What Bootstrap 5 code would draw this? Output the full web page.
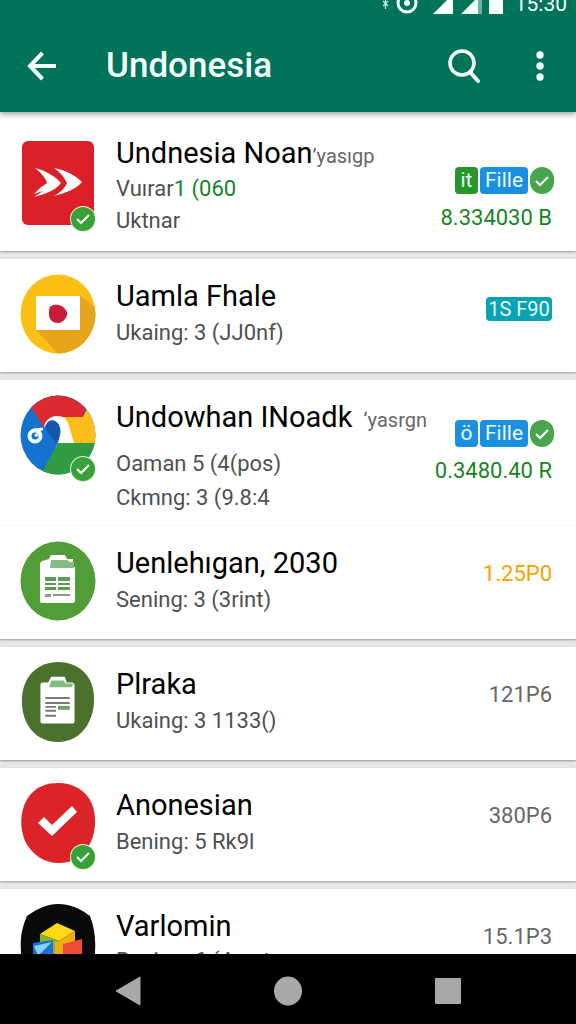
<!DOCTYPE html>
<html lang="id">
<head>
<meta charset="utf-8">
<meta name="viewport" content="width=device-width, initial-scale=1">
<title>Undonesia</title>
<link href="https://cdn.jsdelivr.net/npm/bootstrap@5.3.0/dist/css/bootstrap.min.css" rel="stylesheet">
<script src="https://cdn.jsdelivr.net/npm/bootstrap@5.3.0/dist/js/bootstrap.bundle.min.js" defer></script>
<style>
body{font-family:Roboto,"Liberation Sans",sans-serif;background:#e6e7e8;color:#000}
.app-header{background:#007359;color:#f4fffc;box-shadow:0 2px 6px rgba(0,0,0,.4);z-index:2}
.status-bar{height:14px;overflow:hidden;padding-right:9px;font-size:21px;line-height:20px}
.toolbar{height:98px;padding:6px 12px 0 18px}
.toolbar h1{font-size:35px;line-height:44px;font-weight:500}
.icon-btn{background:none;border:0;padding:0;color:inherit;width:48px;height:48px;display:flex;align-items:center;justify-content:center}
.entry{background:#fff;padding:0 24px 18px 20px;margin-bottom:8px;box-shadow:0 1px 2px rgba(0,0,0,.35)}
.entry.joined{margin-bottom:0;box-shadow:none}
.avatar{width:76px;margin-top:15px}
.avatar svg{display:block}
.texts{margin-left:20px;padding-top:17px}
.entry h2{font-size:29px;line-height:40px;font-weight:400;margin:0;white-space:nowrap}
.tag{font-size:20px;line-height:20px;color:#666}
.entry p{font-size:22px;line-height:34px;margin:0;color:#505050;white-space:nowrap}
.side{padding-top:32px;font-size:22px;line-height:32px;color:#666;white-space:nowrap}
.entry .money{color:#17851f}
.amber{color:#f5a300}
.chips{gap:2px;margin-right:-2px}
.chip{font-size:21px;line-height:27px;height:27px;color:#e9fbff;border-radius:4px;background:#1b8fe0}
.chip-sm{width:23px;text-align:center}
.chip-lg{width:48px;text-align:center}
.chip-green{background:#27962a}
.chip-teal{background:#08a3b3;line-height:24px;height:24px;font-size:20px;width:66px;text-align:center;margin-top:6px}
.entry.first .avatar{margin-top:29px}
.entry.first .texts{padding-top:21px}
.entry.first p{line-height:32px}
.entry.first{padding-bottom:14px}
.entry.first .side{padding-top:55px}
.entry.joined{padding-bottom:11px}
.entry.joined .side{padding-top:40px}
.entry.joined p:first-of-type{margin-top:10px}
.entry.last p{line-height:30px}
.check-badge{right:-1px;bottom:-8px}
.system-nav{background:#000;height:70px;padding:3px 48px 0;color:#a8a8a8;z-index:3}
</style>
</head>
<body class="vh-100 d-flex flex-column overflow-hidden">

<svg width="0" height="0" class="position-absolute" aria-hidden="true">
  <symbol id="check" viewBox="0 0 28 28"><circle cx="14" cy="14" r="13" fill="#e5f2cf"/><circle cx="14" cy="14" r="12" fill="#38a139"/><path d="M8 14l4 4 8-8" fill="none" stroke="#fff" stroke-width="2"/></symbol>
  <symbol id="tick" viewBox="0 0 24 27"><rect width="24" height="27" rx="12" fill="#49a54d"/><path d="M6 14l4 4 8-8" fill="none" stroke="#fff" stroke-width="2"/></symbol>
</svg>

<header class="app-header position-relative flex-shrink-0">
  <div class="status-bar d-flex justify-content-end align-items-end">
    <svg width="128" height="14" viewBox="0 0 128 14" fill="#f4fffc" aria-hidden="true">
      <path d="M4 1l5 5M9 1L4 6M6.500 0v9" stroke="#cdebe2" stroke-width="1.200"/>
      <circle cx="28" cy="3" r="9" fill="none" stroke="#f4fffc" stroke-width="3"/><circle cx="28" cy="3" r="3"/>
      <path d="M54 14L74 -6V14ZM82 14L99 -3V14Z"/><path d="M99 0h4v14h-4z" opacity=".45"/><path d="M110 0h14v14h-14z"/>
    </svg>
    <span class="ms-2">15:30</span>
  </div>
  <div class="toolbar d-flex align-items-center">
    <button class="icon-btn" type="button" aria-label="Back"><svg width="30" height="30" viewBox="0 0 30 30" fill="none" stroke="currentColor" stroke-width="4"><path d="M15.500 2L3 15l12.500 13M3 15h26"/></svg></button>
    <h1 class="m-0 flex-grow-1 ps-4 ms-3">Undonesia</h1>
    <button class="icon-btn me-4" type="button" aria-label="Search"><svg width="34" height="36" viewBox="0 0 34 36" fill="none" stroke="currentColor" stroke-width="3.600"><circle cx="15" cy="15" r="12"/><path d="M23 24l8 9" stroke-width="4" stroke-linecap="round"/></svg></button>
    <button class="icon-btn ms-1" type="button" aria-label="More options"><svg width="8" height="32" viewBox="0 0 8 32" fill="currentColor"><circle cx="4" cy="5" r="3.700"/><circle cx="4" cy="16" r="3.700"/><circle cx="4" cy="27" r="3.700"/></svg></button>
  </div>
</header>

<main class="flex-grow-1 overflow-hidden">
<ul class="list-unstyled m-0">
  <li class="entry first d-flex align-items-start">
    <div class="avatar position-relative flex-shrink-0">
      <svg width="76" height="84" viewBox="0 0 76 84"><rect x="2" y="0" width="72" height="84" rx="6" fill="#dc202a"/><path d="M15 27C27 30 36 36 41 42C36 49 26 53 14 56L23 50L14 53L20 47L27 42C25 36 21 32 15 27ZM34 27C46 29 56 35 62 41C56 48 46 52 34 55C41 51 45 47 47 42C44 36 40 31 34 27Z" fill="#fff"/></svg>
      <svg class="check-badge position-absolute" width="28" height="28"><use href="#check"/></svg>
    </div>
    <div class="texts flex-grow-1">
      <h2>Undnesia Noan<span class="tag">’yasıgp</span></h2>
      <p>Vuırar<span class="money">1 (060</span></p>
      <p>Uktnar</p>
    </div>
    <div class="side text-end">
      <div class="chips d-flex justify-content-end"><span class="chip chip-sm chip-green">it</span><span class="chip chip-lg">Fille</span><svg width="24" height="27"><use href="#tick"/></svg></div>
      <div class="money pt-2">8.334030 B</div>
    </div>
  </li>

  <li class="entry d-flex align-items-start">
    <div class="avatar flex-shrink-0">
      <svg width="76" height="80" viewBox="0 0 76 80"><defs><clipPath id="disc"><ellipse cx="38" cy="40" rx="37.500" ry="39.500"/></clipPath></defs><g clip-path="url(#disc)"><path d="M0 0h76v80H0z" fill="#fcc015"/><path d="M60 21L76 34V80H38L16 56Z" fill="#e6a51a"/></g><path d="M16 22h44v34H16z" fill="#fff"/><path d="M31 32C36 29 44 31 47 38C48 42 44 49 38 49C33 49 29 46 29 40C29 36 29 33 31 32Z" fill="#c91c3b"/></svg>
    </div>
    <div class="texts flex-grow-1"><h2>Uamla Fhale</h2><p>Ukaing: 3 (JJ0nf)</p></div>
    <div class="side"><div class="chip chip-teal">1S F90</div></div>
  </li>

  <li class="entry joined d-flex align-items-start">
    <div class="avatar position-relative flex-shrink-0">
      <svg width="76" height="80" viewBox="0 0 76 80"><g clip-path="url(#disc)"><path d="M0 0h76v80H0z" fill="#1672cf"/><path d="M10 10L0 0H66V12L63 22H37C30 22 26 26 24 33Z" fill="#da2930"/><path d="M37 22H63L67 14L80 25V49H54L43 22Z" fill="#fdbe1c"/><path d="M38 48H80V80H20L28 66Z" fill="#329c43"/></g><path d="M24 33C24 26 30 21 37 21C44 21 46 24 48 28L54 48H38L35 54C40 47 41 35 38 29C34 23 27 26 24 33Z" fill="#fff"/><path d="M26 32C26 27 31 24 35 26C41 29 42 38 38 45L36 48C32 42 27 39 26 32Z" fill="#1558ae"/><g fill="none" stroke="#eefcff"><circle cx="15" cy="41" r="5.500" stroke-width="4"/><path d="M14 35l9-1M15 41l3-2" stroke-width="3"/></g></svg>
      <svg class="check-badge position-absolute" width="28" height="28"><use href="#check"/></svg>
    </div>
    <div class="texts flex-grow-1">
      <h2>Undowhan INoadk <span class="tag ms-1">‘yasrgn</span></h2>
      <p>Oaman 5 (4(pos)</p>
      <p>Ckmng: 3 (9.8:4</p>
    </div>
    <div class="side text-end">
      <div class="chips d-flex justify-content-end"><span class="chip chip-sm">ö</span><span class="chip chip-lg">Fille</span><svg width="24" height="27"><use href="#tick"/></svg></div>
      <div class="money pt-2">0.3480.40 R</div>
    </div>
  </li>

  <li class="entry d-flex align-items-start">
    <div class="avatar flex-shrink-0">
      <svg width="76" height="80" viewBox="0 0 76 80"><ellipse cx="38" cy="40" rx="37.500" ry="39.500" fill="#519d38"/><path d="M22 20L29 18L31 14H45L47 18H53V26H55V60Q55 62 53 62H22Q20 62 20 60V22Z" fill="#fff"/><path d="M31 19H47L50 21H54V27H30Z" fill="#82bd83"/><path d="M25 36h11v4H25zM38 36h12v4H38zM25 42h11v2H25zM38 42h12v2H38zM25 46h11v3H25zM38 46h12v3H38z" fill="#5c9b52"/><path d="M25 53h6v3H25zM33 53h17v2H33z" fill="#929592"/></svg>
    </div>
    <div class="texts flex-grow-1"><h2>Uenlehıgan, 2030</h2><p>Sening: 3 (3rint)</p></div>
    <div class="side amber">1.25P0</div>
  </li>

  <li class="entry d-flex align-items-start">
    <div class="avatar flex-shrink-0">
      <svg width="76" height="80" viewBox="0 0 76 82"><path d="M38 0C57 0 75 12 75 38C75 62 61 82 38 82C15 82 1 64 1 40C1 14 18 0 38 0Z" fill="#4b722c"/><path d="M22 21H28L31 15H45L47 21H52Q55 21 55 24V61Q55 63 53 63H22Q20 63 20 61V24Q20 21 22 21Z" fill="#fff"/><path d="M31 19H44L46 22H54L52 26H29Z" fill="#83bb83"/><path d="M25 36h25v2H25zM25 41h25v2H25zM25 45h11v2H25zM25 49h11v2H25zM25 54h11v2H25z" fill="#777c76"/><path d="M38 45h12v4H38z" fill="#69a365"/></svg>
    </div>
    <div class="texts flex-grow-1"><h2>Plraka</h2><p>Ukaing: 3 1133()</p></div>
    <div class="side">121P6</div>
  </li>

  <li class="entry d-flex align-items-start">
    <div class="avatar position-relative flex-shrink-0">
      <svg width="76" height="80" viewBox="0 0 76 80"><path d="M38 0C53 0 66 7 72 21C77 34 76 52 68 64C60 76 50 80 39 80C24 80 12 72 5 58C-1 43 0 25 10 12C18 3 27 0 38 0Z" fill="#dc2428"/><path d="M18 40L24 34L32 42L52 23L57 29L32 53Z" fill="#fff"/></svg>
      <svg class="check-badge position-absolute" width="28" height="28"><use href="#check"/></svg>
    </div>
    <div class="texts flex-grow-1"><h2>Anonesian</h2><p>Bening: 5 Rk9l</p></div>
    <div class="side">380P6</div>
  </li>

  <li class="entry last d-flex align-items-start">
    <div class="avatar flex-shrink-0">
      <svg width="76" height="80" viewBox="0 0 76 80"><path d="M7 12C18 4 28 0 38 0C49 0 60 4 70 12C74 22 76 34 75 48C74 70 55 80 38 80C20 80 2 70 1 48C0 34 2 23 7 12Z" fill="#0a0a0a"/><path d="M20 30L37 19L55 27L39 37Z" fill="#ffd817"/><path d="M20 30L39 37V60L20 52Z" fill="#86b72b"/><path d="M39 37L55 27V38L43 43V60H35V38Z" fill="#f0ad17"/><path d="M13 39L33 36V60L13 55Z" fill="#1771d3"/><path d="M14 42L32 38L18 52Z" fill="#83d3f5"/><path d="M43 40L62 35V55L43 60Z" fill="#ee4d35"/></svg>
    </div>
    <div class="texts flex-grow-1"><h2>Varlomin</h2><p>Bening: 6 (4ernt</p></div>
    <div class="side">15.1P3</div>
  </li>
</ul>
</main>

<nav class="system-nav position-relative flex-shrink-0 d-flex align-items-center" aria-label="System">
  <button class="icon-btn flex-fill" type="button" aria-label="Back"><svg width="26" height="30" viewBox="0 0 26 30"><path d="M1 15L25 1V29Z" fill="currentColor" stroke="currentColor" stroke-linejoin="round"/></svg></button>
  <button class="icon-btn flex-fill" type="button" aria-label="Home"><svg width="28" height="30" viewBox="0 0 28 30"><ellipse cx="14" cy="15" rx="14" ry="14.500" fill="currentColor"/></svg></button>
  <button class="icon-btn flex-fill" type="button" aria-label="Recent apps"><svg width="26" height="26" viewBox="0 0 26 26"><rect width="26" height="26" rx="1" fill="currentColor"/></svg></button>
</nav>
</body>
</html>
